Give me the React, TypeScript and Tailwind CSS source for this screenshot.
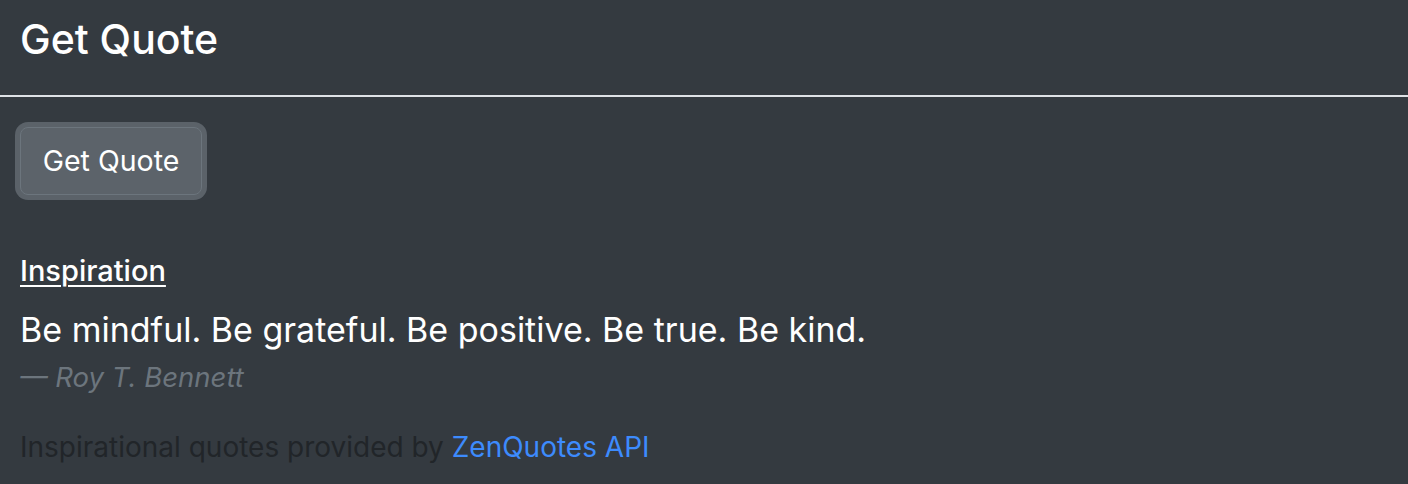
const App = () => {
  return (
    <div
      className="min-h-[484px] bg-[#343a40] text-white"
      style={{ fontFamily: "Inter, 'Liberation Sans', sans-serif" }}
    >
      <div className="h-[97px] border-b-2 border-[#dee2e6] px-5 pt-[14px]">
        <h2 className="text-[41px] font-medium leading-[50px]">Get Quote</h2>
      </div>
      <div className="px-5 pt-[30px]">
        <button className="h-[68px] w-[182px] rounded-[8px] border border-[#6c757d] bg-[#5c636a] text-[28.5px] leading-none text-white shadow-[0_0_0_5px_rgba(130,138,145,0.5)]">
          Get Quote
        </button>
        <div className="mt-[58px]">
          <div className="text-[29px] font-medium leading-[35px] underline decoration-2 underline-offset-[4px]">
            Inspiration
          </div>
          <p className="mt-[21px] text-[34px] leading-[41px]">
            Be mindful. Be grateful. Be positive. Be true. Be kind.
          </p>
          <p className="mt-[10px] text-[27.5px] italic leading-[34px] text-[#6c757d]">
            — Roy T. Bennett
          </p>
          <p className="mt-[36px] text-[28px] leading-[34px] text-[#212529]">
            Inspirational quotes provided by{" "}
            <a href="#" className="text-[#3d8bfd]">
              ZenQuotes API
            </a>
          </p>
        </div>
      </div>
    </div>
  );
};

export default App;
